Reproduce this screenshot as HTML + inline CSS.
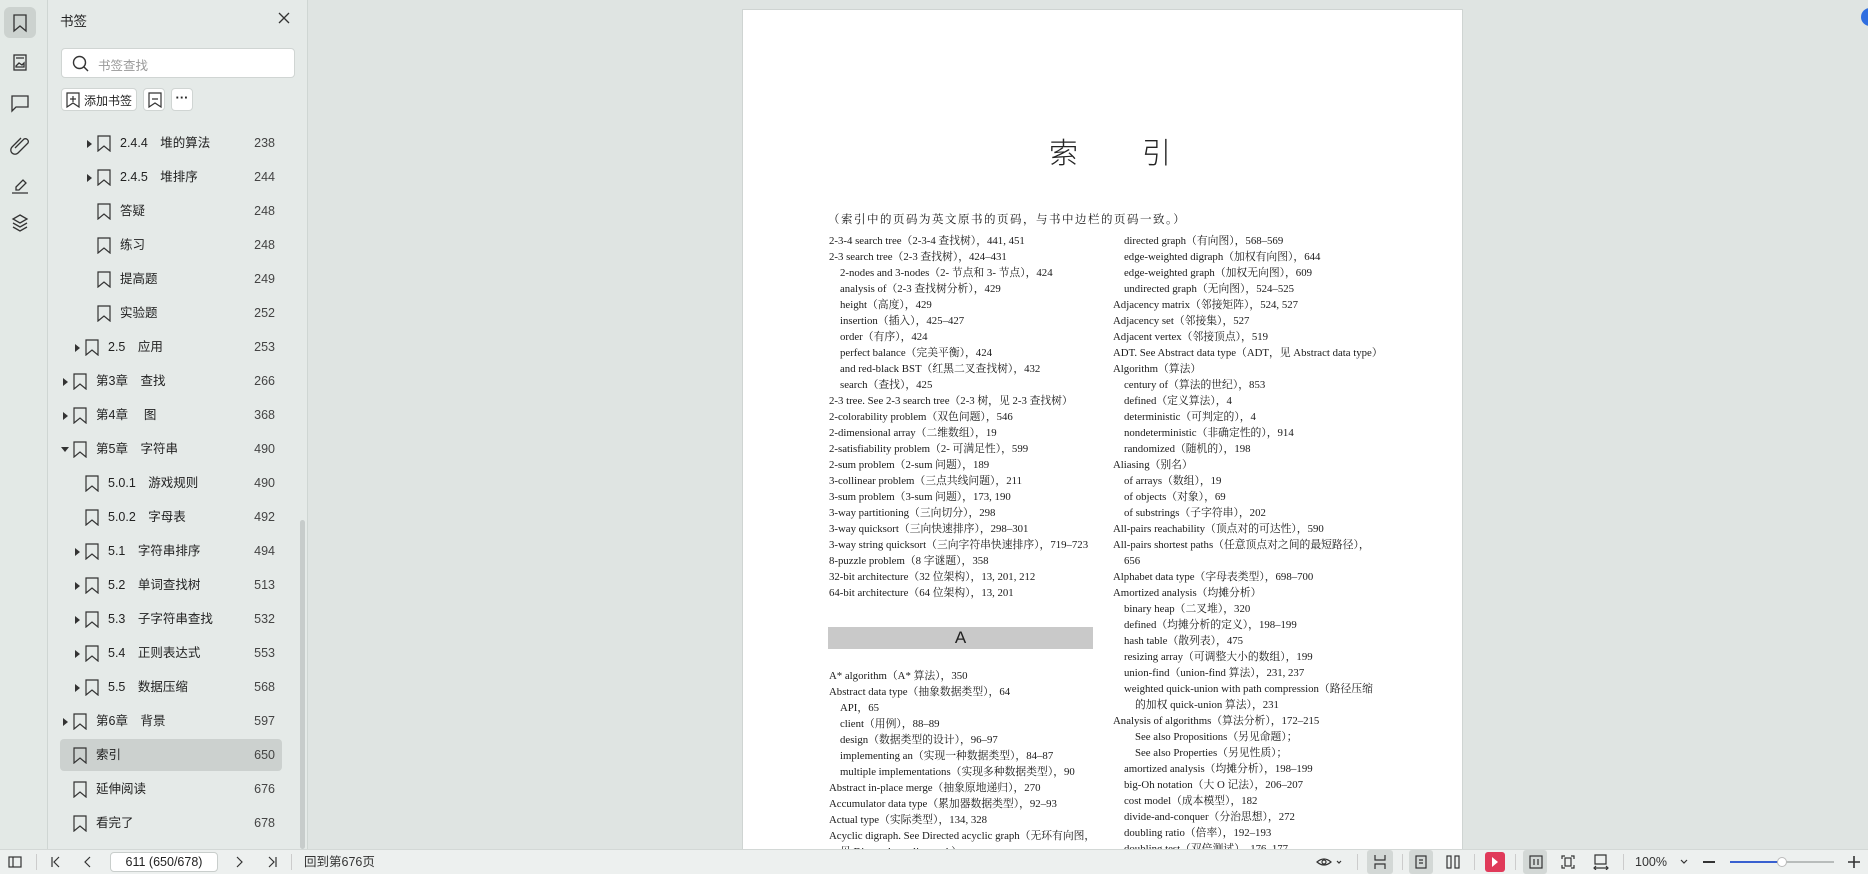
<!DOCTYPE html>
<html><head><meta charset="utf-8"><style>
*{margin:0;padding:0;box-sizing:border-box}
body{width:1868px;height:874px;overflow:hidden;background:#dfe4e2;font-family:"Liberation Sans","Noto Sans CJK SC",sans-serif;position:relative;color:#222}
.abs{position:absolute}
#icol{left:0;top:0;width:48px;height:849px;background:#e3e9e6;border-right:1px solid #cfd6d3}
#panel{left:48px;top:0;width:260px;height:849px;background:#e5eae8;border-right:1px solid #cfd6d3}
.row{position:absolute;height:34px;line-height:34px;font-size:12.5px;color:#222}
.row .n{position:absolute;right:0;width:40px;text-align:right;color:#444;top:0}
.bm{position:absolute;top:9px;width:14px;height:17px}
.tri{position:absolute;top:14px;width:0;height:0;border-top:4px solid transparent;border-bottom:4px solid transparent;border-left:5px solid #333}
.tri.d{border-left:4px solid transparent;border-right:4px solid transparent;border-top:5px solid #333;border-bottom:0;top:15px}
#page{left:742px;top:9px;width:721px;height:845px;background:#fff;border:1px solid #cfd4d2}
.pg{font-family:"Liberation Serif","Noto Serif CJK SC",serif;font-size:10.8px;color:#1a1a1a;position:absolute;white-space:nowrap;line-height:16px;height:16px}
#tb{left:0;top:849px;width:1868px;height:25px;background:#edf0ef;border-top:1px solid #d3d8d6;font-size:12px}
.ti{position:absolute;top:0;height:24px;line-height:24px;color:#333}
</style></head><body>

<div id="icol" class="abs">
 <div class="abs" style="left:4px;top:7px;width:32px;height:31px;background:#ccd2cf;border-radius:6px"></div>
 <svg class="abs" style="left:0;top:0" width="48" height="240" fill="none" stroke="#333" stroke-width="1.3">
  <path d="M14 15h12v16l-6-5-6 5z"/>
  <rect x="14" y="55" width="12" height="15"/><path d="M16 66l3-3 3 2 2-2v4h-8z M16 58h8"/>
  <path d="M12 96h16v11H16l-4 4z"/>
  <path d="M15 148l9-9a3 3 0 0 1 4 4l-10 10a4 4 0 0 1-6-6l9-9"/>
  <path d="M12 193h16 M16 187l7-7 3 3-7 7h-3z"/>
  <path d="M20 215l7 4-7 4-7-4z M13 223l7 4 7-4 M13 227l7 4 7-4"/>
 </svg>
</div>

<div id="panel" class="abs">
 <div class="abs" style="left:12px;top:10px;font-size:13.5px;color:#222">书签</div>
 <svg class="abs" style="left:230px;top:12px" width="12" height="12" stroke="#333" stroke-width="1.3"><path d="M1 1l10 10M11 1L1 11"/></svg>
 <div class="abs" style="left:13px;top:48px;width:234px;height:30px;background:#fff;border:1px solid #d0d5d3;border-radius:4px">
  <svg class="abs" style="left:10px;top:6px" width="18" height="18" fill="none" stroke="#333" stroke-width="1.4"><circle cx="7.5" cy="7.5" r="6"/><path d="M12 12l4 4"/></svg>
  <div class="abs" style="left:36px;top:6px;font-size:12.5px;color:#999">书签查找</div>
 </div>
 <div class="abs" style="left:13px;top:88px;width:76px;height:23px;background:#fff;border:1px solid #d0d5d3;border-radius:4px">
  <svg class="abs" style="left:4px;top:3px" width="14" height="16" fill="none" stroke="#333" stroke-width="1.2"><path d="M1 1h12v14l-6-4-6 4z M7 4v6M4 7h6"/></svg>
  <div class="abs" style="left:22px;top:3px;font-size:12px">添加书签</div>
 </div>
 <div class="abs" style="left:95px;top:88px;width:22px;height:23px;background:#fff;border:1px solid #d0d5d3;border-radius:4px">
  <svg class="abs" style="left:4px;top:3px" width="14" height="16" fill="none" stroke="#333" stroke-width="1.2"><path d="M1 1h12v14l-6-4-6 4z M4 7h6"/></svg>
 </div>
 <div class="abs" style="left:123px;top:88px;width:22px;height:23px;background:#fff;border:1px solid #d0d5d3;border-radius:4px;text-align:center;line-height:18px;font-size:13px;font-weight:bold">···</div>
 <div class="abs" style="left:12px;top:739px;width:222px;height:32px;background:#ccd1cf;border-radius:4px"></div>
 <div class="abs" style="left:252px;top:520px;width:5px;height:329px;background:#c7cccb;border-radius:3px"></div>
</div>

<div id="rows"></div>

<div id="page" class="abs">
 <div class="abs" style="left:306px;top:120px;font-family:'Noto Sans CJK SC',sans-serif;font-size:29px;color:#222;font-weight:300">索</div>
 <div class="abs" style="left:399px;top:120px;font-family:'Noto Sans CJK SC',sans-serif;font-size:29px;color:#222;font-weight:300">引</div>
 <div class="abs" style="left:85px;top:617px;width:265px;height:22px;background:#c9c9c9;text-align:center;font-size:17px;line-height:22px;color:#222">A</div>
</div>

<div id="tb" class="abs">
 <svg class="abs" style="left:8px;top:6px" width="14" height="12" fill="none" stroke="#333" stroke-width="1.2"><rect x="1" y="1" width="12" height="10"/><path d="M5 1v10"/></svg>
 <div class="abs" style="left:36px;top:4px;width:1px;height:16px;background:#ccc"></div>
 <svg class="abs" style="left:50px;top:6px" width="12" height="12" fill="none" stroke="#333" stroke-width="1.2"><path d="M2 1v10M9 1L4 6l5 5"/></svg>
 <svg class="abs" style="left:83px;top:6px" width="10" height="12" fill="none" stroke="#333" stroke-width="1.2"><path d="M7 1L2 6l5 5"/></svg>
 <div class="abs" style="left:110px;top:2px;width:108px;height:20px;background:#fff;border:1px solid #c9cecc;border-radius:4px;text-align:center;line-height:18px;font-size:12.5px">611 (650/678)</div>
 <svg class="abs" style="left:234px;top:6px" width="10" height="12" fill="none" stroke="#333" stroke-width="1.2"><path d="M3 1l5 5-5 5"/></svg>
 <svg class="abs" style="left:266px;top:6px" width="12" height="12" fill="none" stroke="#333" stroke-width="1.2"><path d="M10 1v10M3 1l5 5-5 5"/></svg>
 <div class="abs" style="left:291px;top:4px;width:1px;height:16px;background:#ccc"></div>
 <div class="ti" style="left:304px;font-size:12.5px">回到第676页</div>
 <svg class="abs" style="left:1316px;top:5px" width="30" height="14" fill="none" stroke="#333" stroke-width="1.2"><path d="M1 7q7-6 14 0q-7 6-14 0z"/><circle cx="8" cy="7" r="2"/><path d="M21 6l2 2 2-2"/></svg>
 <div class="abs" style="left:1357px;top:4px;width:1px;height:16px;background:#ccc"></div>
 <div class="abs" style="left:1367px;top:0;width:26px;height:24px;background:#d3d8d6;border-radius:3px"></div>
 <svg class="abs" style="left:1373px;top:5px" width="14" height="14" fill="none" stroke="#333" stroke-width="1.2"><path d="M2 0v5h10V0 M2 14V9h10v5"/></svg>
 <div class="abs" style="left:1402px;top:4px;width:1px;height:16px;background:#ccc"></div>
 <div class="abs" style="left:1409px;top:0;width:24px;height:24px;background:#d3d8d6;border-radius:3px"></div>
 <svg class="abs" style="left:1415px;top:5px" width="12" height="14" fill="none" stroke="#333" stroke-width="1.2"><rect x="1" y="1" width="10" height="12"/><path d="M4 5h4M4 8h4"/></svg>
 <svg class="abs" style="left:1446px;top:5px" width="14" height="14" fill="none" stroke="#333" stroke-width="1.2"><rect x="1" y="1" width="4" height="12"/><rect x="9" y="1" width="4" height="12"/></svg>
 <div class="abs" style="left:1474px;top:4px;width:1px;height:16px;background:#ccc"></div>
 <div class="abs" style="left:1485px;top:2px;width:20px;height:20px;background:#e03a5a;border-radius:3px"></div>
 <svg class="abs" style="left:1491px;top:7px" width="8" height="10"><path d="M1 0l6 5-6 5z" fill="#fff"/></svg>
 <div class="abs" style="left:1515px;top:4px;width:1px;height:16px;background:#ccc"></div>
 <div class="abs" style="left:1523px;top:0;width:24px;height:24px;background:#d3d8d6;border-radius:3px"></div>
 <svg class="abs" style="left:1529px;top:5px" width="14" height="14" fill="none" stroke="#333" stroke-width="1.2"><rect x="1" y="1" width="12" height="12"/><path d="M5 4v6M9 4v6"/></svg>
 <svg class="abs" style="left:1561px;top:5px" width="14" height="14" fill="none" stroke="#333" stroke-width="1.2"><path d="M1 4V1h3M10 1h3v3M13 10v3h-3M4 13H1v-3"/><rect x="4" y="3" width="6" height="8"/></svg>
 <svg class="abs" style="left:1593px;top:4px" width="16" height="16" fill="none" stroke="#333" stroke-width="1.2"><path d="M2 1h11v9H2z M1 14h14M3 12l-2 2 2 2M13 12l2 2-2 2"/></svg>
 <div class="abs" style="left:1623px;top:4px;width:1px;height:16px;background:#ccc"></div>
 <div class="ti" style="left:1635px;font-size:12.5px">100%</div>
 <svg class="abs" style="left:1680px;top:9px" width="8" height="6" fill="none" stroke="#333" stroke-width="1.2"><path d="M1 1l3 3 3-3"/></svg>
 <div class="abs" style="left:1703px;top:11px;width:12px;height:2px;background:#333"></div>
 <div class="abs" style="left:1730px;top:11px;width:52px;height:2px;background:#3860d0"></div>
 <div class="abs" style="left:1782px;top:11px;width:52px;height:2px;background:#b8bcbb"></div>
 <div class="abs" style="left:1777px;top:7px;width:10px;height:10px;background:#fff;border:1px solid #bbb;border-radius:50%"></div>
 <svg class="abs" style="left:1848px;top:6px" width="12" height="12" stroke="#333" stroke-width="1.6"><path d="M6 0v12M0 6h12"/></svg>
</div>
<div class="abs" style="left:1861px;top:8px;width:18px;height:18px;border-radius:50%;background:#2f6ee0"></div>

<script>
var R=[
[3,'2.4.4　堆的算法','238',1],[3,'2.4.5　堆排序','244',1],[3,'答疑','248',0],[3,'练习','248',0],[3,'提高题','249',0],[3,'实验题','252',0],
[2,'2.5　应用','253',1],[1,'第3章　查找','266',1],[1,'第4章　 图','368',1],[1,'第5章　字符串','490',2],
[2,'5.0.1　游戏规则','490',0],[2,'5.0.2　字母表','492',0],[2,'5.1　字符串排序','494',1],[2,'5.2　单词查找树','513',1],[2,'5.3　子字符串查找','532',1],[2,'5.4　正则表达式','553',1],[2,'5.5　数据压缩','568',1],
[1,'第6章　背景','597',1],[1,'索引','650',0],[1,'延伸阅读','676',0],[1,'看完了','678',0]];
var h='';
R.forEach(function(r,i){var y=126+i*34;var bx=r[0]==3?97:(r[0]==2?85:73);
h+='<div class="row" style="left:0;top:'+y+'px;width:275px">';
if(r[3]==1)h+='<div class="tri" style="left:'+(bx-10)+'px"></div>';
if(r[3]==2)h+='<div class="tri d" style="left:'+(bx-12)+'px"></div>';
h+='<svg class="bm" style="left:'+bx+'px" fill="none" stroke="#333" stroke-width="1.2"><path d="M1 1h12v15l-6-5-6 5z"/></svg>';
h+='<span style="position:absolute;left:'+(bx+23)+'px">'+r[1]+'</span><span class="n">'+r[2]+'</span></div>';});
document.getElementById('rows').innerHTML=h;
var P=document.getElementById('page');
function L(x,y,t){var d=document.createElement('div');d.className='pg';d.style.left=(x-742)+'px';d.style.top=(y-8-9)+'px';d.textContent=t;P.appendChild(d);}
var hd=document.createElement('div');hd.className='pg';hd.style.left='85px';hd.style.top='202px';hd.style.fontSize='11.5px';hd.style.letterSpacing='1.5px';hd.textContent='（索引中的页码为英文原书的页码，与书中边栏的页码一致。）';P.appendChild(hd);
var left=[[0,'2-3-4 search tree（2-3-4 查找树），441, 451'],[0,'2-3 search tree（2-3 查找树），424–431'],[1,'2-nodes and 3-nodes（2- 节点和 3- 节点），424'],[1,'analysis of（2-3 查找树分析），429'],[1,'height（高度），429'],[1,'insertion（插入），425–427'],[1,'order（有序），424'],[1,'perfect balance（完美平衡），424'],[1,'and red-black BST（红黑二叉查找树），432'],[1,'search（查找），425'],[0,'2-3 tree. See 2-3 search tree（2-3 树，见 2-3 查找树）'],[0,'2-colorability problem（双色问题），546'],[0,'2-dimensional array（二维数组），19'],[0,'2-satisfiability problem（2- 可满足性），599'],[0,'2-sum problem（2-sum 问题），189'],[0,'3-collinear problem（三点共线问题），211'],[0,'3-sum problem（3-sum 问题），173, 190'],[0,'3-way partitioning（三向切分），298'],[0,'3-way quicksort（三向快速排序），298–301'],[0,'3-way string quicksort（三向字符串快速排序），719–723'],[0,'8-puzzle problem（8 字谜题），358'],[0,'32-bit architecture（32 位架构），13, 201, 212'],[0,'64-bit architecture（64 位架构），13, 201']];
left.forEach(function(r,i){L(828+r[0]*11,240+i*16,r[1]);});
var la=[[0,'A* algorithm（A* 算法），350'],[0,'Abstract data type（抽象数据类型），64'],[1,'API，65'],[1,'client（用例），88–89'],[1,'design（数据类型的设计），96–97'],[1,'implementing an（实现一种数据类型），84–87'],[1,'multiple implementations（实现多种数据类型），90'],[0,'Abstract in-place merge（抽象原地递归），270'],[0,'Accumulator data type（累加器数据类型），92–93'],[0,'Actual type（实际类型），134, 328'],[0,'Acyclic digraph. See Directed acyclic graph（无环有向图，'],[1,'见 Directed acyclic graph）']];
la.forEach(function(r,i){L(828+r[0]*11,675+i*16,r[1]);});
var right=[[1,'directed graph（有向图），568–569'],[1,'edge-weighted digraph（加权有向图），644'],[1,'edge-weighted graph（加权无向图），609'],[1,'undirected graph（无向图），524–525'],[0,'Adjacency matrix（邻接矩阵），524, 527'],[0,'Adjacency set（邻接集），527'],[0,'Adjacent vertex（邻接顶点），519'],[0,'ADT. See Abstract data type（ADT，见 Abstract data type）'],[0,'Algorithm（算法）'],[1,'century of（算法的世纪），853'],[1,'defined（定义算法），4'],[1,'deterministic（可判定的），4'],[1,'nondeterministic（非确定性的），914'],[1,'randomized（随机的），198'],[0,'Aliasing（别名）'],[1,'of arrays（数组），19'],[1,'of objects（对象），69'],[1,'of substrings（子字符串），202'],[0,'All-pairs reachability（顶点对的可达性），590'],[0,'All-pairs shortest paths（任意顶点对之间的最短路径），'],[1,'656'],[0,'Alphabet data type（字母表类型），698–700'],[0,'Amortized analysis（均摊分析）'],[1,'binary heap（二叉堆），320'],[1,'defined（均摊分析的定义），198–199'],[1,'hash table（散列表），475'],[1,'resizing array（可调整大小的数组），199'],[1,'union-find（union-find 算法），231, 237'],[1,'weighted quick-union with path compression（路径压缩'],[2,'的加权 quick-union 算法），231'],[0,'Analysis of algorithms（算法分析），172–215'],[2,'See also Propositions（另见命题）；'],[2,'See also Properties（另见性质）；'],[1,'amortized analysis（均摊分析），198–199'],[1,'big-Oh notation（大 O 记法），206–207'],[1,'cost model（成本模型），182'],[1,'divide-and-conquer（分治思想），272'],[1,'doubling ratio（倍率），192–193'],[1,'doubling test（双倍测试），176–177']];
right.forEach(function(r,i){L(1112+r[0]*11,240+i*16,r[1]);});
</script>
</body></html>
